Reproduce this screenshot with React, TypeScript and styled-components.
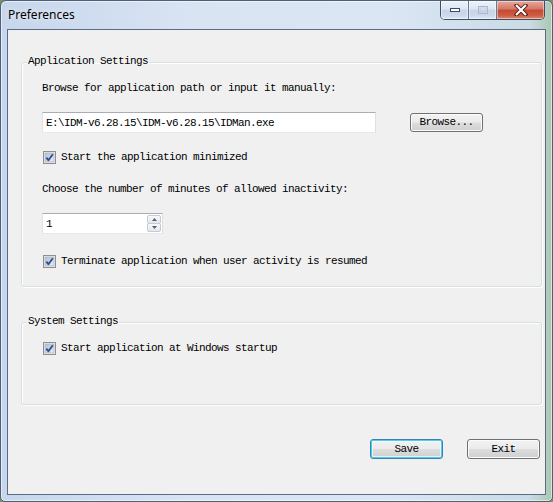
import React from "react";
import styled, { createGlobalStyle, css } from "styled-components";

const Global = createGlobalStyle`
  html, body { margin: 0; padding: 0; }
  body {
    width: 553px;
    height: 502px;
    overflow: hidden;
    background: #7d8c6a;
  }
  #root { width: 553px; height: 502px; }
`;

const MONO = `"Liberation Mono", "DejaVu Sans Mono", monospace`;

const Window = styled.div`
  box-sizing: border-box;
  width: 553px;
  height: 502px;
  display: flex;
  flex-direction: column;
  border: 1px solid #4f5f78;
  border-radius: 6px 6px 5px 5px;
  background: linear-gradient(90deg, #c6d6ec 0%, #d9e4f3 35%, #dbe6f4 70%, #c9dbe4 96%, #a9c7ae 100%);
  box-shadow: inset 0 0 0 1px rgba(255, 255, 255, 0.55);
  overflow: hidden;
`;

const TitleBar = styled.div`
  height: 28px;
  display: flex;
  align-items: flex-start;
  justify-content: space-between;
  padding: 0 7px 0 7px;
`;

const Title = styled.div`
  font-family: "Noto Sans", "Open Sans", sans-serif;
  font-size: 12px;
  line-height: 14px;
  color: #000;
  padding-top: 7px;
  text-shadow: 0 0 6px rgba(255, 255, 255, 0.9);
`;

const CaptionGroup = styled.div`
  display: flex;
  height: 18px;
  border: 1px solid #3f4e66;
  border-top: none;
  border-radius: 0 0 5px 5px;
  overflow: hidden;
`;

const CaptionButton = styled.div<{ $kind: "min" | "max" | "close" }>`
  box-sizing: border-box;
  height: 18px;
  display: flex;
  align-items: center;
  justify-content: center;
  box-shadow: inset 0 0 0 1px rgba(255, 255, 255, 0.45);
  ${(p) =>
    p.$kind === "close"
      ? css`
          width: 47px;
          background: linear-gradient(180deg, #e9a99b 0%, #d47763 45%, #c24a33 50%, #cf5b42 80%, #e08b6d 100%);
        `
      : css`
          width: 28px;
          border-right: 1px solid #65789a;
          background: linear-gradient(180deg, #eef3fa 0%, #dde6f2 45%, #c7d5e8 50%, #ccd9ea 80%, #dfe8f4 100%);
        `}
`;

const Body = styled.div`
  flex: 1;
  display: flex;
  padding: 0 6px 6px 6px;
`;

const Client = styled.div`
  flex: 1;
  display: flex;
  flex-direction: column;
  background: #f0f0f0;
  border: 1px solid #5b6b84;
  padding: 24px 3px 0 13px;
`;

const Group = styled.fieldset<{ $gapTop?: number }>`
  margin: ${(p) => p.$gapTop ?? 0}px 0 0 0;
  padding: 0;
  border: 1px solid #d5dfe5;
  border-radius: 3px;
  box-shadow: inset 1px 1px 0 #fff, 1px 1px 0 #fff;
  min-width: 0;
`;

const Legend = styled.legend`
  margin-left: 5px;
  padding: 0 1px 3px 1px;
  font-family: ${MONO};
  font-size: 11px;
  letter-spacing: -0.6px;
  line-height: 14px;
  color: #000;
`;

const GroupContent = styled.div<{ $top: number; $bottom: number }>`
  display: flex;
  flex-direction: column;
  align-items: flex-start;
  padding: ${(p) => p.$top}px 0 ${(p) => p.$bottom}px 20px;
`;

const Label = styled.div<{ $gapTop?: number }>`
  margin-top: ${(p) => p.$gapTop ?? 0}px;
  font-family: ${MONO};
  font-size: 11px;
  letter-spacing: -0.6px;
  line-height: 14px;
  color: #000;
  white-space: pre;
`;

const PathRow = styled.div`
  margin-top: 17px;
  display: flex;
  align-items: flex-start;
  gap: 34px;
`;

const TextField = styled.div<{ $width: number }>`
  box-sizing: border-box;
  width: ${(p) => p.$width}px;
  height: 21px;
  display: flex;
  align-items: center;
  background: #fff;
  border: 1px solid;
  border-color: #abadb3 #dbdfe6 #e3e9ef #e2e3ea;
  font-family: ${MONO};
  font-size: 11px;
  letter-spacing: -0.6px;
  line-height: 14px;
  color: #000;
  padding-left: 3px;
  white-space: pre;
`;

const Button = styled.div<{ $default?: boolean }>`
  box-sizing: border-box;
  width: 73px;
  height: 20px;
  display: flex;
  align-items: center;
  justify-content: center;
  padding-bottom: 1px;
  border: 1px solid #707070;
  border-radius: 3px;
  background: linear-gradient(180deg, #f2f2f2 0%, #ebebeb 48%, #dddddd 52%, #cfcfcf 100%);
  box-shadow: inset 0 0 0 1px #fcfcfc;
  font-family: ${MONO};
  font-size: 11px;
  letter-spacing: -0.6px;
  line-height: 14px;
  color: #000;
  ${(p) =>
    p.$default &&
    css`
      border-color: #3c7fb1;
      box-shadow: inset 0 0 0 1px #48d1f3, inset 0 0 0 2px rgba(255, 255, 255, 0.6);
    `}
`;

const BrowseButton = styled(Button)`
  height: 19px;
  margin-top: 1px;
`;

const CheckRow = styled.div<{ $gapTop?: number }>`
  margin-top: ${(p) => p.$gapTop ?? 0}px;
  display: flex;
  align-items: center;
  gap: 5px;
  height: 14px;
  padding-left: 1px;
`;

const SpinBox = styled(TextField)`
  margin-top: 17px;
  justify-content: space-between;
  padding-right: 1px;
`;

const SpinButtons = styled.div`
  display: flex;
  flex-direction: column;
  width: 14px;
  height: 17px;
`;

const SpinHalf = styled.div`
  flex: 1;
  display: flex;
  align-items: center;
  justify-content: center;
  border: 1px solid #c5cbd3;
  border-radius: 2px;
  background: linear-gradient(180deg, #fbfbfb, #e4e6ea);
  & + & { margin-top: -1px; }
`;

const ButtonRow = styled.div`
  margin-top: 34px;
  display: flex;
  justify-content: flex-end;
  gap: 24px;
  padding-right: 2px;
`;

function CheckBox() {
  return (
    <svg width="13" height="13" viewBox="0 0 13 13">
      <defs>
        <linearGradient id="cbFill" x1="0" y1="0" x2="1" y2="1">
          <stop offset="0" stopColor="#b3bfcd" />
          <stop offset="1" stopColor="#eaeef3" />
        </linearGradient>
      </defs>
      <rect x="0.5" y="0.5" width="12" height="12" fill="#f4f4f4" stroke="#8e8f8f" />
      <rect x="2" y="2" width="9" height="9" fill="url(#cbFill)" stroke="#aeb4bc" strokeWidth="0.8" />
      <path d="M3.3 6.6 L5.4 9.2 L9.8 3.2" fill="none" stroke="#2d4f9e" strokeWidth="1.9" strokeLinejoin="round" />
    </svg>
  );
}

function Check({ text, gapTop }: { text: string; gapTop?: number }) {
  return (
    <CheckRow $gapTop={gapTop}>
      <CheckBox />
      <Label>{text}</Label>
    </CheckRow>
  );
}

function Arrow({ up }: { up?: boolean }) {
  return (
    <svg width="5" height="3" viewBox="0 0 5 3">
      <path d={up ? "M0 3 L2.5 0 L5 3 Z" : "M0 0 L2.5 3 L5 0 Z"} fill="#4d6185" />
    </svg>
  );
}

function MinIcon() {
  return (
    <svg width="12" height="6" viewBox="0 0 12 6">
      <rect x="1.5" y="1.5" width="9" height="3" fill="#fff" stroke="#3a4c6a" />
    </svg>
  );
}

function MaxIcon() {
  return (
    <svg width="12" height="10" viewBox="0 0 12 10">
      <rect x="1.5" y="1.5" width="9" height="7" fill="none" stroke="#a9b8cc" />
      <rect x="3" y="3" width="6" height="4" fill="none" stroke="#c2cedd" />
    </svg>
  );
}

function CloseIcon() {
  return (
    <svg width="14" height="12" viewBox="0 0 14 12">
      <path d="M2.5 1.5 L11.5 10.5 M11.5 1.5 L2.5 10.5" stroke="#5a1c12" strokeWidth="4" strokeLinecap="square" />
      <path d="M2.8 1.8 L11.2 10.2 M11.2 1.8 L2.8 10.2" stroke="#fff" strokeWidth="2.2" strokeLinecap="square" />
    </svg>
  );
}

export default function App() {
  return (
    <>
      <Global />
      <Window>
        <TitleBar>
          <Title>Preferences</Title>
          <CaptionGroup>
            <CaptionButton $kind="min">
              <MinIcon />
            </CaptionButton>
            <CaptionButton $kind="max">
              <MaxIcon />
            </CaptionButton>
            <CaptionButton $kind="close">
              <CloseIcon />
            </CaptionButton>
          </CaptionGroup>
        </TitleBar>
        <Body>
          <Client>
            <Group>
              <Legend>Application Settings</Legend>
              <GroupContent $top={10} $bottom={18}>
                <Label>Browse for application path or input it manually:</Label>
                <PathRow>
                  <TextField $width={334}>E:\IDM-v6.28.15\IDM-v6.28.15\IDMan.exe</TextField>
                  <BrowseButton>Browse...</BrowseButton>
                </PathRow>
                <Check gapTop={17} text="Start the application minimized" />
                <Label $gapTop={18}>Choose the number of minutes of allowed inactivity:</Label>
                <SpinBox $width={121}>
                  <span>1</span>
                  <SpinButtons>
                    <SpinHalf>
                      <Arrow up />
                    </SpinHalf>
                    <SpinHalf>
                      <Arrow />
                    </SpinHalf>
                  </SpinButtons>
                </SpinBox>
                <Check gapTop={20} text="Terminate application when user activity is resumed" />
              </GroupContent>
            </Group>
            <Group $gapTop={27}>
              <Legend>System Settings</Legend>
              <GroupContent $top={10} $bottom={49}>
                <Check text="Start application at Windows startup" />
              </GroupContent>
            </Group>
            <ButtonRow>
              <Button $default>Save</Button>
              <Button>Exit</Button>
            </ButtonRow>
          </Client>
        </Body>
      </Window>
    </>
  );
}
